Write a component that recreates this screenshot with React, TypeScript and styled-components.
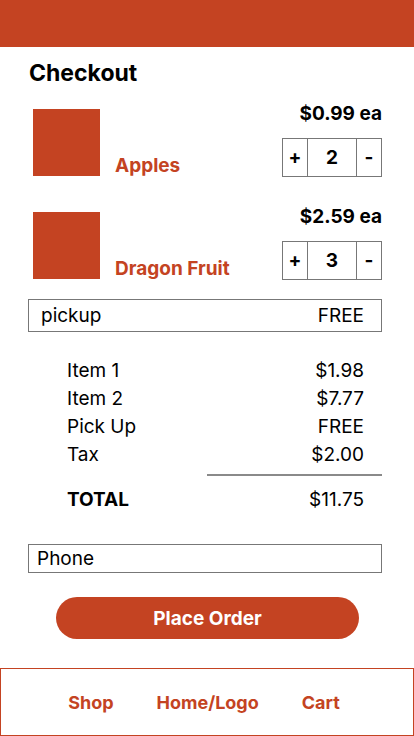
import React from "react";
import styled, { createGlobalStyle } from "styled-components";

const ORANGE = "#c44322";
const GREY = "#777777";

const Global = createGlobalStyle`
  * { box-sizing: border-box; }
  body {
    margin: 0;
    font-family: Inter, "Noto Sans", Arial, sans-serif;
    color: #000;
    background: #fff;
  }
`;

const Page = styled.div`
  display: flex;
  flex-direction: column;
  height: 736px;
  width: 414px;
  overflow: hidden;
`;

const Header = styled.header`
  height: 47px;
  background: ${ORANGE};
  flex-shrink: 0;
`;

const Main = styled.main`
  padding: 0 32px 0 28px;
  display: flex;
  flex-direction: column;
`;

const Title = styled.h1`
  margin: 13px 0 0 1px;
  font-size: 23px;
  line-height: 26px;
  font-weight: 700;
`;

const ItemList = styled.div`
  margin-top: 17px;
  display: flex;
  flex-direction: column;
  gap: 29px;
`;

const ItemRow = styled.div`
  display: flex;
  align-items: flex-end;
`;

const Thumb = styled.div`
  width: 67px;
  height: 67px;
  background: ${ORANGE};
  margin-left: 5px;
  margin-bottom: 1px;
  flex-shrink: 0;
`;

const ItemName = styled.div`
  margin-left: 15px;
  font-size: 19px;
  line-height: 22px;
  font-weight: 700;
  color: ${ORANGE};
  flex: 1;
`;

const PriceCol = styled.div`
  display: flex;
  flex-direction: column;
  align-items: flex-end;
`;

const Price = styled.div`
  font-size: 19px;
  line-height: 22px;
  font-weight: 700;
`;

const Qty = styled.div`
  margin-top: 13px;
  display: grid;
  grid-template-columns: 24px 50px 24px;
  height: 39px;
  border: 1px solid ${GREY};
`;

const QtyCell = styled.div<{ $divider?: boolean }>`
  display: flex;
  align-items: center;
  justify-content: center;
  font-size: 19px;
  font-weight: 700;
  border-left: ${(p) => (p.$divider ? `1px solid ${GREY}` : "none")};
  border-right: ${(p) => (p.$divider ? `1px solid ${GREY}` : "none")};
`;

const Pickup = styled.div`
  margin-top: 19px;
  height: 33px;
  border: 1px solid ${GREY};
  display: flex;
  justify-content: space-between;
  align-items: center;
  padding: 0 17px 0 12px;
  font-size: 19px;
`;

const Summary = styled.div`
  margin-top: 25px;
  display: flex;
  flex-direction: column;
`;

const SumRow = styled.div<{ $bold?: boolean }>`
  display: flex;
  justify-content: space-between;
  padding: 0 18px 0 39px;
  font-size: 19px;
  line-height: 28px;
  font-weight: ${(p) => (p.$bold ? 700 : 400)};
`;

const SumValue = styled.span`
  font-weight: 400;
`;

const Rule = styled.div`
  align-self: flex-end;
  width: 175px;
  height: 2px;
  background: #8a8a8a;
  margin: 5px 0 10px;
`;

const PhoneInput = styled.input`
  margin-top: 30px;
  height: 29px;
  border: 1px solid ${GREY};
  border-radius: 0;
  padding: 0 8px;
  font-family: inherit;
  font-size: 19px;
  color: #000;
  outline: none;
  &::placeholder { color: #000; opacity: 1; }
`;

const OrderButton = styled.button`
  align-self: center;
  margin: 24px 0 0 5px;
  width: 303px;
  height: 42px;
  border: none;
  border-radius: 21px;
  background: ${ORANGE};
  color: #fff;
  font-family: inherit;
  font-size: 19px;
  font-weight: 700;
`;

const Footer = styled.nav`
  margin-top: auto;
  height: 68px;
  border: 1px solid ${ORANGE};
  display: flex;
  justify-content: center;
  align-items: center;
  gap: 43px;
  padding-right: 6px;
`;

const NavLink = styled.span`
  font-size: 18px;
  font-weight: 700;
  color: ${ORANGE};
`;

const items = [
  { name: "Apples", price: "$0.99 ea", qty: 2 },
  { name: "Dragon Fruit", price: "$2.59 ea", qty: 3 },
];

const summary = [
  ["Item 1", "$1.98"],
  ["Item 2", "$7.77"],
  ["Pick Up", "FREE"],
  ["Tax", "$2.00"],
];

export default function App() {
  return (
    <Page>
      <Global />
      <Header />
      <Main>
        <Title>Checkout</Title>
        <ItemList>
          {items.map((it) => (
            <ItemRow key={it.name}>
              <Thumb />
              <ItemName>{it.name}</ItemName>
              <PriceCol>
                <Price>{it.price}</Price>
                <Qty>
                  <QtyCell>+</QtyCell>
                  <QtyCell $divider>{it.qty}</QtyCell>
                  <QtyCell>-</QtyCell>
                </Qty>
              </PriceCol>
            </ItemRow>
          ))}
        </ItemList>
        <Pickup>
          <span>pickup</span>
          <span>FREE</span>
        </Pickup>
        <Summary>
          {summary.map(([k, v]) => (
            <SumRow key={k}>
              <span>{k}</span>
              <SumValue>{v}</SumValue>
            </SumRow>
          ))}
          <Rule />
          <SumRow $bold>
            <span>TOTAL</span>
            <SumValue>$11.75</SumValue>
          </SumRow>
        </Summary>
        <PhoneInput placeholder="Phone" />
        <OrderButton>Place Order</OrderButton>
      </Main>
      <Footer>
        <NavLink>Shop</NavLink>
        <NavLink>Home/Logo</NavLink>
        <NavLink>Cart</NavLink>
      </Footer>
    </Page>
  );
}
